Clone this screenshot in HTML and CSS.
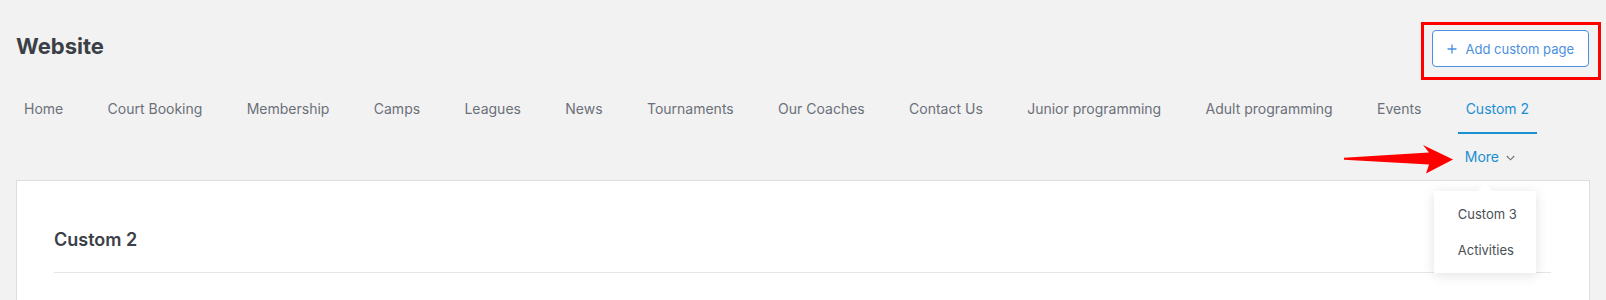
FILE: index.html
```html
<!DOCTYPE html>
<html>
<head>
<meta charset="utf-8">
<link rel="stylesheet" href="styles.css">
</head>
<body>
<div class="page">
  <header class="header">
    <h1 class="title">Website</h1>
    <div class="highlight">
      <button class="add-btn"><svg class="plus" width="10" height="10" viewBox="0 0 10 10"><path d="M5 0.5V9.5M0.5 5H9.5" stroke="currentColor" stroke-width="1.3" fill="none"/></svg><span>Add custom page</span></button>
    </div>
  </header>
  <nav class="nav">
    <a class="nav-item">Home</a>
    <a class="nav-item">Court Booking</a>
    <a class="nav-item">Membership</a>
    <a class="nav-item">Camps</a>
    <a class="nav-item">Leagues</a>
    <a class="nav-item">News</a>
    <a class="nav-item">Tournaments</a>
    <a class="nav-item">Our Coaches</a>
    <a class="nav-item">Contact Us</a>
    <a class="nav-item">Junior programming</a>
    <a class="nav-item">Adult programming</a>
    <a class="nav-item">Events</a>
    <a class="nav-item active">Custom 2</a>
  </nav>
  <div class="nav-more-row">
    <div class="more">
      <svg class="annot-arrow" width="120" height="40" viewBox="0 0 120 40"><polygon points="5,17.8 90,12.5 84,5 114,19.5 87,33.5 90,24.5 5,19.8" fill="#ff0000"/></svg>
      <span class="more-label">More</span>
      <svg class="chev" width="9" height="6" viewBox="0 0 9 6"><path d="M0.8 1L4.5 4.8L8.2 1" stroke="#6b7079" stroke-width="1.1" fill="none"/></svg>
      <div class="dropdown">
        <div class="dd-item">Custom 3</div>
        <div class="dd-item">Activities</div>
      </div>
    </div>
  </div>
  <section class="card">
    <h2 class="card-title">Custom 2</h2>
  </section>
</div>
</body>
</html>
```
FILE: styles.css
```css
* { box-sizing: border-box; }
html, body { margin: 0; padding: 0; }
body {
  background: #f2f2f2;
  font-family: Inter, "Noto Sans", sans-serif;
  overflow: hidden;
}
.page { padding: 0 16px; }

.header {
  display: flex;
  justify-content: space-between;
  align-items: flex-start;
  padding-top: 22px;
  height: 86px;
}
.title {
  margin: 9px 0 0 0;
  font-size: 22px;
  line-height: 30px;
  font-weight: 700;
  color: #3b4046;
}
.highlight {
  border: 3px solid #ff0000;
  padding: 5px 9px 10px 8px;
  margin-right: -11px;
}
.add-btn {
  display: flex;
  align-items: center;
  gap: 9px;
  height: 37px;
  padding: 0 14px;
  background: #fff;
  border: 1px solid #4a8fe0;
  border-radius: 4px;
  color: #4a8fe0;
  font-family: inherit;
  font-size: 13px;
}

.nav {
  display: flex;
  gap: 28.35px;
}
.nav-item {
  padding: 0 8px;
  height: 48px;
  line-height: 46px;
  border-bottom: 2px solid transparent;
  font-size: 14px;
  color: #6b7079;
  white-space: nowrap;
}
.nav-item.active {
  color: #1a8fd1;
  border-bottom-color: #1a8fd1;
}

.nav-more-row {
  display: flex;
  justify-content: flex-end;
  padding-right: 67px;
}
.more {
  position: relative;
  display: flex;
  align-items: center;
  gap: 7px;
  height: 46px;
  padding: 0 8px;
  font-size: 14px;
  color: #1a8fd1;
}
.more-label { line-height: 44px; }
.chev { margin-top: 1px; }
.annot-arrow {
  position: absolute;
  left: -118px;
  top: 6px;
}
.dropdown {
  position: absolute;
  top: 57px;
  left: -23px;
  width: 102px;
  padding: 5px 0;
  background: #fff;
  box-shadow: 0 2px 12px rgba(0, 0, 0, 0.12);
  z-index: 5;
}
.dropdown::before {
  content: "";
  position: absolute;
  top: -9px;
  left: 44px;
  border-left: 7px solid transparent;
  border-right: 7px solid transparent;
  border-bottom: 9px solid #fff;
}
.dd-item {
  height: 36px;
  line-height: 36px;
  padding-left: 24px;
  font-size: 13px;
  color: #4a4f56;
}

.card {
  background: #fff;
  border: 1px solid #dddddd;
  min-height: 200px;
  padding: 47px 38px 0 37px;
}
.card-title {
  margin: 0;
  font-size: 18px;
  line-height: 24px;
  font-weight: 600;
  color: #3b4046;
  padding-bottom: 20px;
  border-bottom: 1px solid #e1e6eb;
}
```
